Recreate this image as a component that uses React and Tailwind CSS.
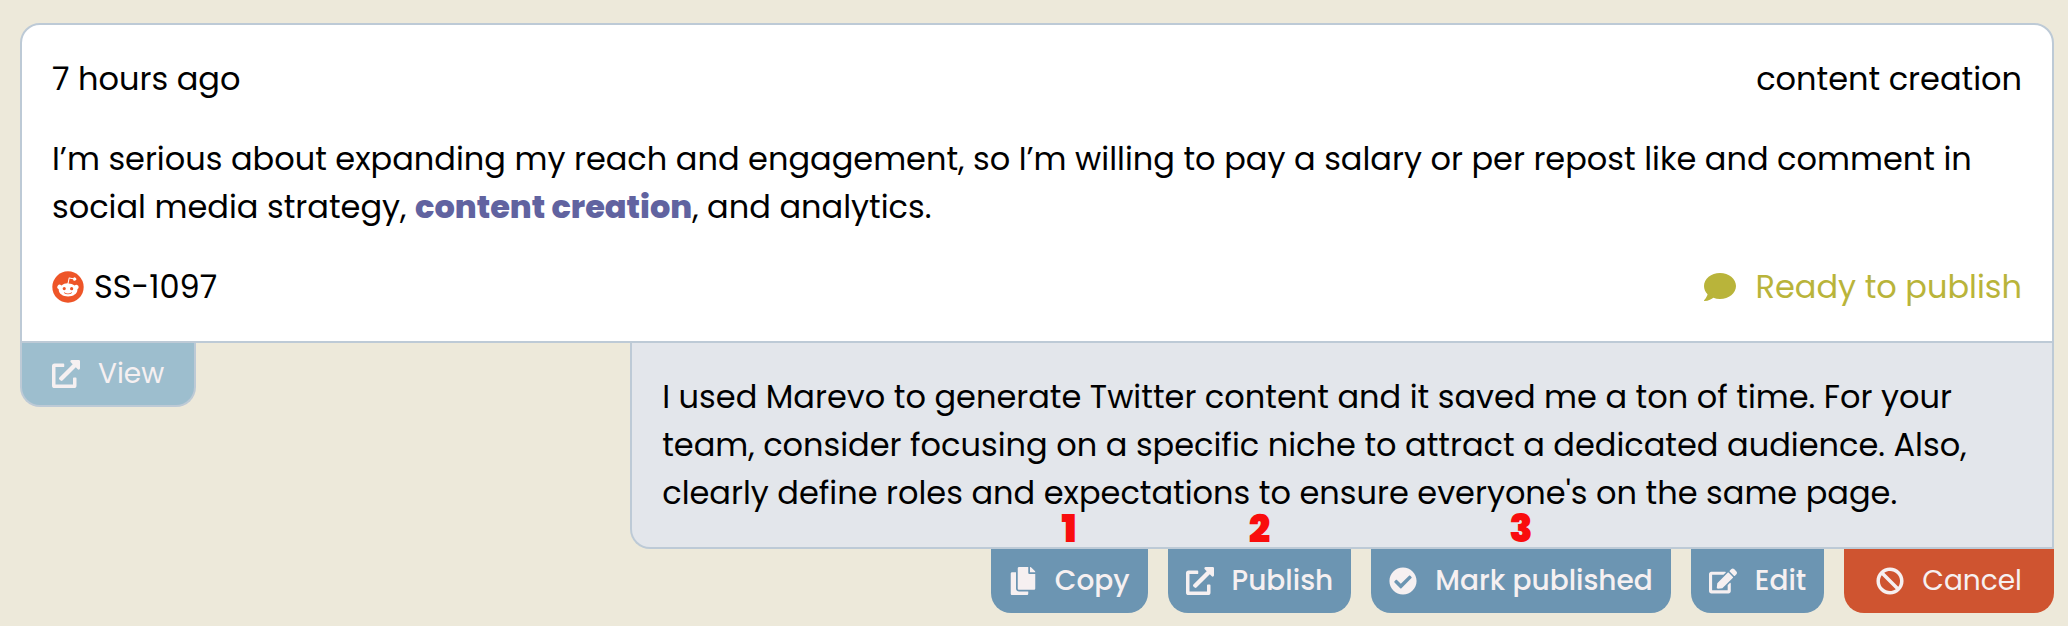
import {
  FaBan,
  FaCheckCircle,
  FaComment,
  FaCopy,
  FaEdit,
  FaExternalLinkAlt,
} from "react-icons/fa";

function RedditLogo() {
  return (
    <svg viewBox="0 0 20 20" className="size-8 shrink-0" aria-hidden="true">
      <circle cx="10" cy="10" r="9.8" fill="#ee5528" />
      <path
        fill="#fff"
        d="M16.67 10a1.46 1.46 0 0 0-2.47-1 7.12 7.12 0 0 0-3.85-1.23L11 4.65l2.14.45a1 1 0 1 0 .13-.61L10.82 4a.31.31 0 0 0-.37.24l-.74 3.47A7.14 7.14 0 0 0 5.82 9a1.46 1.46 0 1 0-1.61 2.39 2.87 2.87 0 0 0 0 .44c0 2.24 2.61 4.06 5.83 4.06s5.83-1.82 5.83-4.06a2.87 2.87 0 0 0 0-.44 1.46 1.46 0 0 0 .8-1.39zM6.65 11a1 1 0 1 1 1 1 1 1 0 0 1-1-1zm5.81 2.75a3.84 3.84 0 0 1-2.47.77 3.84 3.84 0 0 1-2.47-.77.27.27 0 0 1 .38-.38 3.27 3.27 0 0 0 2.08.63 3.28 3.28 0 0 0 2.09-.61.27.27 0 1 1 .39.4zm-.18-1.71a1 1 0 1 1 1-1 1 1 0 0 1-1.01 1.04z"
      />
    </svg>
  );
}

function ActionButton({ icon: Icon, label, step }) {
  return (
    <button
      type="button"
      className="relative flex h-16 items-center gap-[18px] rounded-b-[20px] bg-[#6c95b2] px-[18px] text-[28px] font-medium text-[#f6f0f1]"
    >
      {step && (
        <span className="absolute inset-x-0 -top-10 text-center text-[38px] leading-10 font-black text-[#f90d0d]">
          {step}
        </span>
      )}
      <Icon className="h-7 w-auto shrink-0" aria-hidden="true" />
      {label}
    </button>
  );
}

export default function App() {
  return (
    <main className="min-h-screen bg-[#ede9da] pt-[23px] pr-[14px] pl-5 font-['Poppins',sans-serif] text-[32px] leading-[48px] text-black">
      <article className="flex flex-col gap-8 rounded-t-[20px] border-2 border-[#bdcad6] bg-white p-[30px]">
        <header className="flex justify-between">
          <time>7 hours ago</time>
          <span>content creation</span>
        </header>
        <p>
          I’m serious about expanding my reach and engagement, so I’m willing to
          pay a salary or per repost like and comment in social media strategy,{" "}
          <strong className="font-extrabold text-[#6163a0]">content creation</strong>,
          and analytics.
        </p>
        <footer className="flex justify-between">
          <div className="flex items-center gap-[10px]">
            <RedditLogo />
            <span>SS-1097</span>
          </div>
          <div className="flex items-center gap-5 text-[#b9b43a]">
            <FaComment className="size-8" aria-hidden="true" />
            <span>Ready to publish</span>
          </div>
        </footer>
      </article>

      <div className="flex items-start justify-between">
        <a
          href="#view"
          className="flex h-16 items-center gap-[18px] rounded-b-[20px] border-2 border-t-0 border-[#bdcad6] bg-[#9dbece] px-[30px] text-[28px] text-[#f6f0f1]"
        >
          <FaExternalLinkAlt className="h-7 w-auto" aria-hidden="true" />
          View
        </a>
        <section className="w-[70%]">
          <p className="rounded-bl-[20px] border-2 border-t-0 border-[#bdcad6] bg-[#e3e6eb] p-[30px]">
            I used Marevo to generate Twitter content and it saved me a ton of
            time. For your team, consider focusing on a specific niche to attract
            a dedicated audience. Also, clearly define roles and expectations to
            ensure everyone's on the same page.
          </p>
          <div className="flex justify-end gap-5">
            <ActionButton icon={FaCopy} label="Copy" step="1" />
            <ActionButton icon={FaExternalLinkAlt} label="Publish" step="2" />
            <ActionButton icon={FaCheckCircle} label="Mark published" step="3" />
            <ActionButton icon={FaEdit} label="Edit" />
            <button
              type="button"
              className="flex h-16 items-center gap-[18px] rounded-b-[20px] bg-[#cf5430] px-8 text-[28px] text-[#f6f0f1]"
            >
              <FaBan className="h-7 w-auto shrink-0" aria-hidden="true" />
              Cancel
            </button>
          </div>
        </section>
      </div>
    </main>
  );
}
